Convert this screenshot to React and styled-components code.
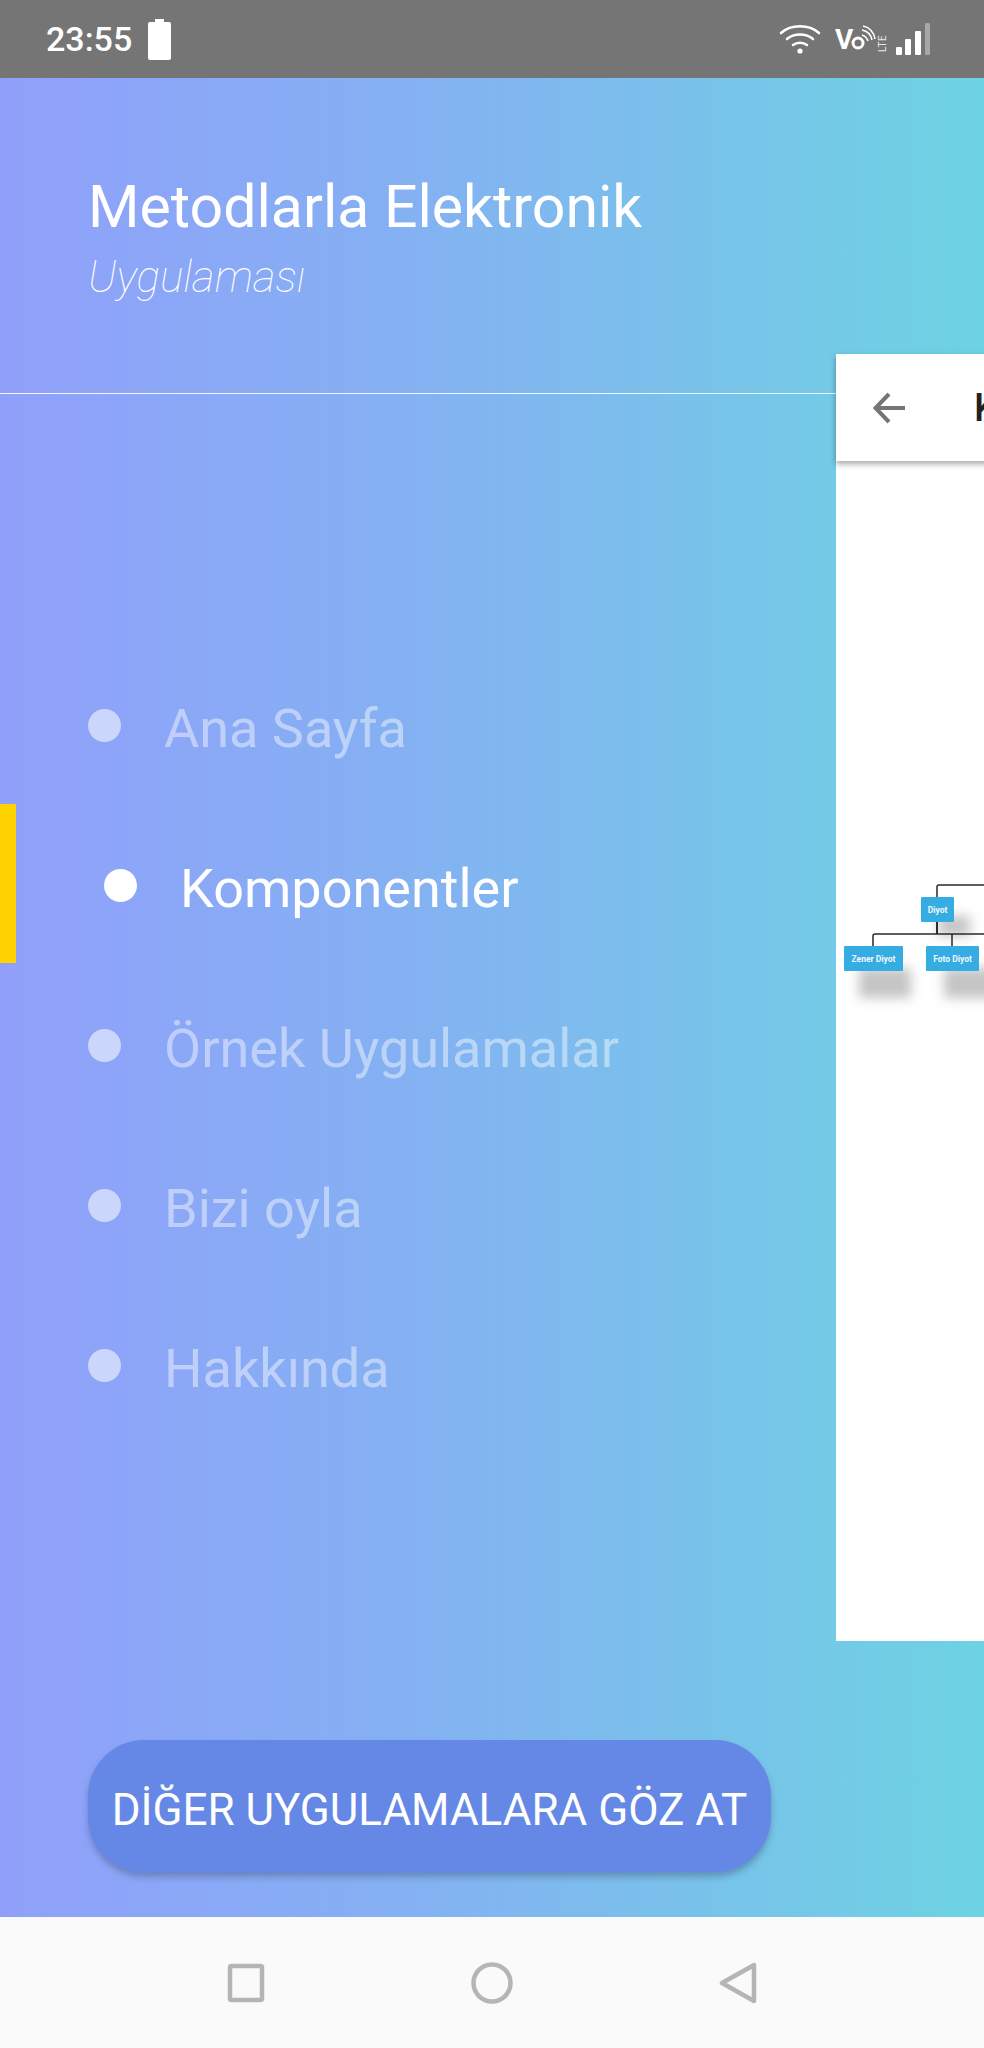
import React from 'react';
import styled, { createGlobalStyle } from 'styled-components';

const GlobalStyle = createGlobalStyle`
  html, body {
    margin: 0;
    padding: 0;
    background: #fafafa;
  }
  * {
    box-sizing: border-box;
  }
`;

const Screen = styled.div`
  width: 984px;
  height: 2048px;
  display: flex;
  flex-direction: column;
  overflow: hidden;
  font-family: Roboto, "Liberation Sans", sans-serif;
`;

const StatusBar = styled.div`
  height: 78px;
  flex: none;
  background: #757575;
  display: flex;
  align-items: center;
  justify-content: space-between;
  padding: 0 53px 0 46px;
  color: #fff;
`;

const StatusLeft = styled.div`
  display: flex;
  align-items: center;
  gap: 16px;
`;

const Clock = styled.span`
  font-size: 34px;
  font-weight: 500;
  line-height: 78px;
`;

const StatusRight = styled.div`
  display: flex;
  align-items: center;
`;

const Drawer = styled.div`
  position: relative;
  flex: 1;
  background: linear-gradient(90deg, #90a0fa 0%, #85b0f3 40%, #6dd3e2 100%);
  overflow: hidden;
`;

const Brand = styled.div`
  height: 316px;
  padding: 99px 0 0 88px;
  color: #fff;
  border-bottom: 1px solid rgba(255, 255, 255, 0.9);
  width: 836px;
`;

const Title = styled.div`
  font-size: 59px;
  line-height: 60px;
`;

const Subtitle = styled.div`
  font-size: 44px;
  font-weight: 100;
  font-style: italic;
  line-height: 48px;
  margin-top: 16px;
`;

const Menu = styled.nav`
  margin-top: 253px;
  display: flex;
  flex-direction: column;
`;

const MenuRow = styled.div`
  position: relative;
  height: 160px;
  display: flex;
  align-items: center;
  gap: 44px;
  padding-left: ${(p) => (p.$active ? '104px' : '88px')};
  color: #fff;
`;

const Dot = styled.span`
  width: 33px;
  height: 33px;
  border-radius: 50%;
  background: #fff;
  flex: none;
  opacity: ${(p) => (p.$active ? 1 : 0.55)};
  margin-top: -4px;
`;

const MenuLabel = styled.span`
  font-size: 54px;
  line-height: 60px;
  padding-top: 3px;
  margin-left: -1px;
  opacity: ${(p) => (p.$active ? 1 : 0.45)};
`;

const ActiveMark = styled.span`
  position: absolute;
  left: 0;
  top: -3px;
  width: 16px;
  height: 159px;
  background: #ffd200;
`;

const MoreButton = styled.button`
  display: block;
  margin: 293px 0 0 88px;
  width: 683px;
  height: 132px;
  border: none;
  border-radius: 56px;
  background: #6587e6;
  color: #fff;
  font-family: inherit;
  font-size: 44px;
  padding: 7px 0 0;
  white-space: nowrap;
  box-shadow: 0 5px 6px rgba(60, 80, 120, 0.4);
`;

const Preview = styled.div`
  position: absolute;
  left: 836px;
  top: 276px;
  width: 500px;
  height: 1287px;
  background: #fff;
`;

const PreviewBar = styled.div`
  height: 107px;
  display: flex;
  align-items: center;
  gap: 69px;
  padding-left: 37px;
  background: #fff;
  box-shadow: 0 3px 6px rgba(0, 0, 0, 0.35);
`;

const PreviewTitle = styled.span`
  font-size: 38px;
  font-weight: 500;
  color: #212121;
  white-space: nowrap;
`;

const Chart = styled.svg`
  position: absolute;
  left: 0;
  top: 0;
  display: block;
`;

const NavBar = styled.div`
  height: 131px;
  flex: none;
  background: #fafafa;
  display: grid;
  grid-template-columns: repeat(3, 246px);
  justify-content: center;
  justify-items: center;
  align-items: center;
`;

const items = ['Ana Sayfa', 'Komponentler', 'Örnek Uygulamalar', 'Bizi oyla', 'Hakkında'];

// status bar drawings
const BatteryIcon = () => (
  <svg width="23" height="41" viewBox="0 0 23 41">
    <path d="M7 0h9v3h5a2 2 0 0 1 2 2v34a2 2 0 0 1-2 2H2a2 2 0 0 1-2-2V5a2 2 0 0 1 2-2h5z" fill="#fff" />
  </svg>
);

const WifiIcon = () => (
  <svg width="42" height="30" viewBox="0 0 42 30" fill="none" stroke="#fff" strokeWidth="2.6" strokeLinecap="round">
    <path d="M2 9C12 0 30 0 40 9" />
    <path d="M8 15c7-6 19-6 26 0" />
    <path d="M14 21c4-3 10-3 14 0" />
    <circle cx="21" cy="27" r="2.6" fill="#fff" stroke="none" />
  </svg>
);

const VoLteIcon = () => (
  <svg width="58" height="44" viewBox="0 -7 58 44" style={{ marginLeft: 14 }}>
    <text x="0" y="25" fontFamily="Roboto" fontWeight="700" fontSize="28" fill="#fff">V</text>
    <circle cx="23" cy="19" r="5" fill="none" stroke="#fff" strokeWidth="3" />
    <g fill="none" stroke="#fff" strokeWidth="1.6">
      <path d="M27 11c3 1 5 3 6 6" />
      <path d="M27 6c5 1 9 5 10 10" />
      <path d="M28 2c6 1 11 6 12 13" />
    </g>
    <text transform="translate(51 28) rotate(-90)" fontFamily="Roboto" fontSize="10" fill="#e8e8e8" letterSpacing="0.5">LTE</text>
  </svg>
);

const SignalIcon = () => (
  <svg width="36" height="32" viewBox="0 0 36 32" style={{ marginLeft: 2 }}>
    <rect x="1" y="24" width="6" height="8" rx="1" fill="#fff" />
    <rect x="10" y="16" width="6" height="16" rx="1" fill="#fff" />
    <rect x="20" y="8" width="6" height="24" rx="1" fill="#fff" />
    <rect x="30" y="0" width="5" height="32" rx="1.5" fill="#a8a8a8" />
  </svg>
);

const BackArrow = () => (
  <svg width="32" height="32" viewBox="0 0 32 32" fill="none" stroke="#757575" strokeWidth="4">
    <path d="M32 16H3" />
    <path d="M16 2 2.500 16 16 30" />
  </svg>
);

const OrgChart = () => (
  <Chart width="148" height="1287" viewBox="836 354 148 1287">
    <defs>
      <filter id="blur" x="-40%" y="-40%" width="180%" height="180%">
        <feGaussianBlur stdDeviation="6" />
      </filter>
    </defs>
    <g fill="#c4c4c4" filter="url(#blur)">
      <rect x="859" y="968" width="52" height="30" />
      <rect x="944" y="968" width="60" height="30" />
      <rect x="938" y="916" width="32" height="20" />
    </g>
    <g fill="none" stroke="#2a2a2a" strokeWidth="1.500">
      <path d="M937 897V887a2 2 0 0 1 2-2H984" />
      <path d="M937 922V934" strokeWidth="2" />
      <path d="M873 946V936a2 2 0 0 1 2-2H984" />
      <path d="M952 946V934" />
    </g>
    <g fill="#35ade3">
      <rect x="921" y="897" width="33" height="25" rx="1" />
      <rect x="844" y="946" width="59" height="25" rx="1" />
      <rect x="926" y="946" width="53" height="25" rx="1" />
    </g>
    <g fill="#f2f8fc" fontFamily="Roboto" fontWeight="700" fontSize="8.500" textAnchor="middle">
      <text x="937.500" y="913">Diyot</text>
      <text x="873.500" y="962">Zener Diyot</text>
      <text x="952.500" y="962">Foto Diyot</text>
    </g>
  </Chart>
);

const SquareKey = () => (
  <svg width="38" height="40" viewBox="0 0 38 40" fill="none" stroke="#b5b5b5" strokeWidth="4.500">
    <rect x="3" y="3" width="32" height="34" rx="1.500" />
  </svg>
);

const CircleKey = () => (
  <svg width="42" height="42" viewBox="0 0 42 42" fill="none" stroke="#b5b5b5" strokeWidth="4.500">
    <circle cx="21" cy="21" r="18.500" />
  </svg>
);

const TriangleKey = () => (
  <svg width="38" height="42" viewBox="0 0 38 42" fill="none" stroke="#b5b5b5" strokeWidth="4.500" strokeLinejoin="round">
    <path d="M35 3V39L3 21Z" />
  </svg>
);

const App = () => {
  return (
    <Screen>
      <GlobalStyle />
      <StatusBar>
        <StatusLeft>
          <Clock>23:55</Clock>
          <BatteryIcon />
        </StatusLeft>
        <StatusRight>
          <WifiIcon />
          <VoLteIcon />
          <SignalIcon />
        </StatusRight>
      </StatusBar>
      <Drawer>
        <Brand>
          <Title>Metodlarla Elektronik</Title>
          <Subtitle>Uygulaması</Subtitle>
        </Brand>
        <Menu>
          {items.map((item, i) => (
            <MenuRow key={item} $active={i === 1}>
              {i === 1 && <ActiveMark />}
              <Dot $active={i === 1} />
              <MenuLabel $active={i === 1}>{item}</MenuLabel>
            </MenuRow>
          ))}
        </Menu>
        <MoreButton>DİĞER UYGULAMALARA GÖZ AT</MoreButton>
        <Preview>
          <PreviewBar>
            <BackArrow />
            <PreviewTitle>Komponentler</PreviewTitle>
          </PreviewBar>
          <OrgChart />
        </Preview>
      </Drawer>
      <NavBar>
        <SquareKey />
        <CircleKey />
        <TriangleKey />
      </NavBar>
    </Screen>
  );
};

export default App;
